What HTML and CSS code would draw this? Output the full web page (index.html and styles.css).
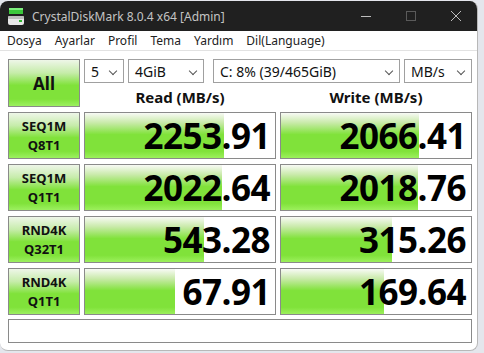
FILE: index.html
```html
<!DOCTYPE html>
<html lang="tr">
<head>
    <meta charset="UTF-8">
    <title>CrystalDiskMark 8.0.4 x64 [Admin]</title>
    <link rel="stylesheet" href="styles.css">
</head>
<body>
    <div class="window">
        <div class="titlebar">
            <svg class="app-icon" width="16" height="17" viewBox="0 0 16 17">
                <rect x="1" y="0" width="14" height="6" fill="#3cc83c"/>
                <rect x="1" y="0" width="14" height="2" fill="#7ef07e"/>
                <rect x="0" y="8" width="16" height="9" rx="2" fill="#e8e8e8"/>
                <rect x="0" y="8" width="16" height="3" rx="1" fill="#bdbdbd"/>
                <rect x="11" y="12" width="3" height="2" fill="#2fb52f"/>
            </svg>
            <span class="title">CrystalDiskMark 8.0.4 x64 [Admin]</span>
            <div class="controls">
                <svg width="12" height="12" viewBox="0 0 12 12"><path d="M1 6.5h10" stroke="#bdbdbd" stroke-width="1"/></svg>
                <svg width="12" height="12" viewBox="0 0 12 12"><rect x="1.5" y="1.5" width="9" height="9" fill="none" stroke="#5a5a5a"/></svg>
                <svg width="12" height="12" viewBox="0 0 12 12"><path d="M1 1l10 10M11 1L1 11" stroke="#bdbdbd" stroke-width="1"/></svg>
            </div>
        </div>

        <div class="menubar">
            <span>Dosya</span>
            <span>Ayarlar</span>
            <span>Profil</span>
            <span>Tema</span>
            <span>Yardım</span>
            <span>Dil(Language)</span>
        </div>

        <div class="client">
            <div class="top">
                <div class="btn all">All</div>
                <div class="top-right">
                    <div class="selects">
                        <div class="select s-count">5 <i></i></div>
                        <div class="select s-size">4GiB <i></i></div>
                        <div class="select s-drive">C: 8% (39/465GiB) <i></i></div>
                        <div class="select s-unit">MB/s <i></i></div>
                    </div>
                    <div class="heads">
                        <div>Read (MB/s)</div>
                        <div>Write (MB/s)</div>
                    </div>
                </div>
            </div>

            <div class="row">
                <div class="btn label">SEQ1M<br>Q8T1</div>
                <div class="value" style="--w: 139px">2253.91</div>
                <div class="value" style="--w: 138px">2066.41</div>
            </div>
            <div class="row">
                <div class="btn label">SEQ1M<br>Q1T1</div>
                <div class="value" style="--w: 137px">2022.64</div>
                <div class="value" style="--w: 137px">2018.76</div>
            </div>
            <div class="row">
                <div class="btn label">RND4K<br>Q32T1</div>
                <div class="value" style="--w: 119px">543.28</div>
                <div class="value" style="--w: 111px">315.26</div>
            </div>
            <div class="row">
                <div class="btn label">RND4K<br>Q1T1</div>
                <div class="value" style="--w: 90px">67.91</div>
                <div class="value" style="--w: 103px">169.64</div>
            </div>

            <div class="status"></div>
        </div>
    </div>
</body>
</html>
```

FILE: styles.css
```css
:root {
    --border: #8a8a8a;
    --green: #80e23a;
}

body {
    margin: 0;
    background: #e4e6ec;
    font-family: 'Noto Sans', 'Open Sans', sans-serif;
    width: 484px;
    height: 353px;
    overflow: hidden;
}

.window {
    margin-top: 1px;
    width: 477px;
    height: 349px;
    background: #fff;
    border-right: 1px solid #b8b8b8;
    border-bottom: 1px solid #b8b8b8;
    border-radius: 8px;
    overflow: hidden;
}

.titlebar {
    height: 30px;
    background: #202020;
    display: flex;
    align-items: center;
}

.app-icon {
    margin-left: 8px;
    margin-right: 8px;
}

.title {
    color: #c4c4c4;
    font-size: 12px;
}

.controls {
    margin-left: auto;
    display: flex;
    gap: 33px;
    margin-right: 15px;
}

.menubar {
    height: 19px;
    border-bottom: 1px solid #e2e2e2;
    display: flex;
    align-items: center;
    font-size: 12px;
    color: #222;
}

.menubar span {
    padding: 0 6px 0 7px;
}

.client {
    padding: 8px 0 0 8px;
}

.top {
    display: flex;
    gap: 4px;
}

.btn {
    box-sizing: border-box;
    border: 1px solid var(--border);
    background: linear-gradient(#eef6e8 0%, #c6ecaa 28%, var(--green) 55%, var(--green) 85%, #9cf060 100%);
    font-weight: bold;
    color: #111;
    display: flex;
    align-items: center;
    justify-content: center;
    text-align: center;
}

.all {
    width: 72px;
    height: 48px;
    font-size: 17px;
}

.top-right {
    width: 388px;
}

.selects {
    display: flex;
    height: 24px;
}

.select {
    box-sizing: border-box;
    height: 24px;
    border: 1px solid #a0a0a0;
    font-size: 14px;
    color: #111;
    padding-left: 6px;
    display: flex;
    align-items: center;
    position: relative;
}

.select i {
    position: absolute;
    right: 7px;
    top: 8px;
    width: 5px;
    height: 5px;
    border-right: 1px solid #555;
    border-bottom: 1px solid #555;
    transform: rotate(45deg);
}

.s-count { width: 40px; }
.s-size { width: 76px; margin-left: 4px; }
.s-drive { width: 187px; margin-left: 9px; }
.s-unit { width: 68px; margin-left: 4px; }

.heads {
    display: flex;
    gap: 4px;
    height: 24px;
    align-items: flex-end;
}

.heads div {
    width: 192px;
    text-align: center;
    font-weight: bold;
    font-size: 15px;
    line-height: 20px;
    color: #111;
}

.row {
    display: flex;
    gap: 4px;
    margin-top: 5px;
    height: 47px;
}

.label {
    width: 72px;
    font-size: 13px;
    line-height: 19px;
}

.value {
    box-sizing: border-box;
    width: 192px;
    border: 1px solid var(--border);
    background: linear-gradient(#f8faf5 0%, #c8eaa8 22%, var(--green) 48%, var(--green) 85%, #9cf05c 100%) no-repeat;
    background-size: var(--w) 100%;
    font-family: 'Open Sans', sans-serif;
    font-weight: bold;
    font-size: 35px;
    line-height: 46px;
    text-align: right;
    padding-right: 5px;
    color: #000;
    letter-spacing: -0.5px;
}

.status {
    box-sizing: border-box;
    margin-top: 4px;
    width: 464px;
    height: 24px;
    border: 1px solid var(--border);
}
```
